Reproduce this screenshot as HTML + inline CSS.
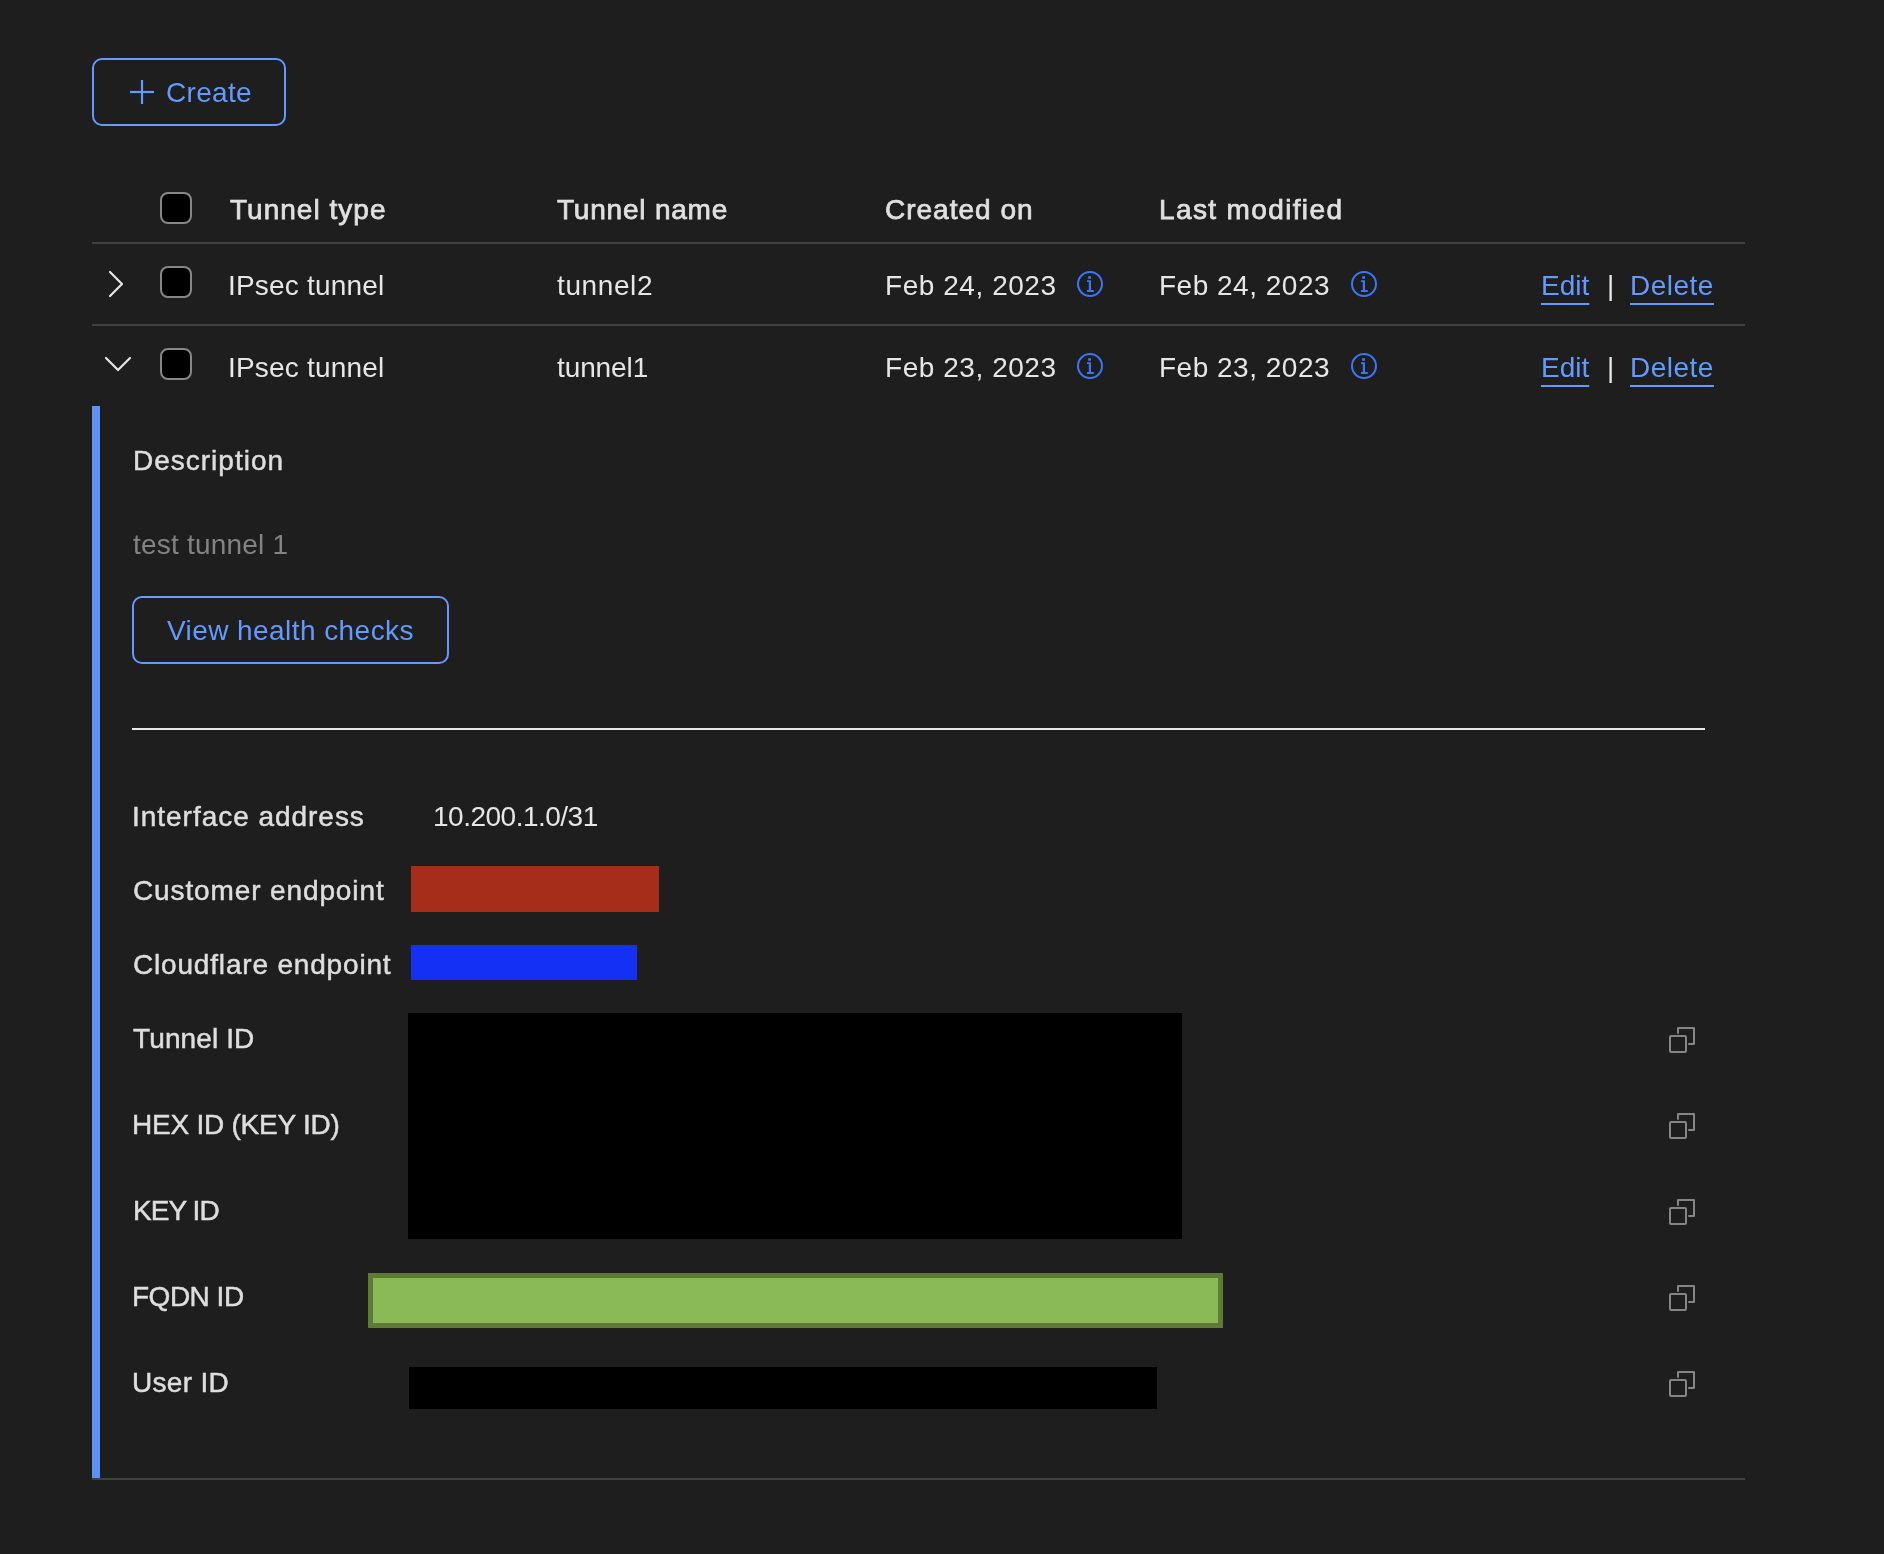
<!DOCTYPE html>
<html>
<head>
<meta charset="utf-8">
<style>
html,body{margin:0;padding:0;}
body{width:1884px;height:1554px;overflow:hidden;background:#1e1e1e;position:relative;font-family:"Liberation Sans",sans-serif;color:#e6e6e6;}
.a{position:absolute;}
.t{position:absolute;font-size:28px;line-height:28px;white-space:nowrap;}
.b{font-weight:700;}
.blue{color:#6499ff;}
.btn{position:absolute;box-sizing:border-box;border:2px solid #6499ff;border-radius:10px;}
.cb{position:absolute;box-sizing:border-box;width:32px;height:32px;border:2px solid #878787;border-radius:8px;background:#000;}
.hl{position:absolute;left:92px;width:1653px;height:2px;background:#404040;}
.lnk{color:#6499ff;text-decoration:underline;text-decoration-thickness:2px;text-underline-offset:8px;}
.lbl{left:133px;}
.hd{-webkit-text-stroke:0.75px #e0e0e0;color:#e0e0e0;}
.med{-webkit-text-stroke:0.5px #dedede;color:#dedede;}
</style>
</head>
<body>
<div id="root" style="position:absolute;left:0;top:0;width:1884px;height:1554px;will-change:transform;">

<!-- Create button -->
<div class="btn" style="left:92px;top:58px;width:194px;height:68px;"></div>
<svg class="a" style="left:0;top:0" width="1884" height="1554">
  <g stroke="#6499ff" stroke-width="2.2" fill="none">
    <line x1="142" y1="80" x2="142" y2="104"/>
    <line x1="130" y1="92" x2="154" y2="92"/>
  </g>
</svg>
<div class="t blue" style="left:166px;top:79px;letter-spacing:0.3px;">Create</div>

<!-- Header -->
<div class="cb" style="left:160px;top:192px;"></div>
<div class="t hd" style="left:230px;top:196px;letter-spacing:1.02px;">Tunnel type</div>
<div class="t hd" style="left:557px;top:196px;letter-spacing:0.79px;">Tunnel name</div>
<div class="t hd" style="left:885px;top:196px;letter-spacing:1px;">Created on</div>
<div class="t hd" style="left:1159px;top:196px;letter-spacing:1.37px;">Last modified</div>
<div class="hl" style="top:242px;"></div>

<!-- Row 1 -->
<div class="cb" style="left:160px;top:266px;"></div>
<div class="t" style="left:228px;top:272px;letter-spacing:0.2px;">IPsec tunnel</div>
<div class="t" style="left:557px;top:272px;letter-spacing:0.6px;">tunnel2</div>
<div class="t" style="left:885px;top:272px;letter-spacing:0.55px;">Feb 24, 2023</div>
<div class="t" style="left:1159px;top:272px;letter-spacing:0.5px;">Feb 24, 2023</div>
<div class="t lnk" style="left:1541px;top:272px;">Edit</div>
<div class="t" style="left:1607px;top:272px;">|</div>
<div class="t lnk" style="left:1630px;top:272px;letter-spacing:0.5px;">Delete</div>
<div class="hl" style="top:324px;"></div>

<!-- Row 2 -->
<div class="cb" style="left:160px;top:348px;"></div>
<div class="t" style="left:228px;top:354px;letter-spacing:0.2px;">IPsec tunnel</div>
<div class="t" style="left:557px;top:354px;letter-spacing:-0.1px;">tunnel1</div>
<div class="t" style="left:885px;top:354px;letter-spacing:0.55px;">Feb 23, 2023</div>
<div class="t" style="left:1159px;top:354px;letter-spacing:0.5px;">Feb 23, 2023</div>
<div class="t lnk" style="left:1541px;top:354px;">Edit</div>
<div class="t" style="left:1607px;top:354px;">|</div>
<div class="t lnk" style="left:1630px;top:354px;letter-spacing:0.5px;">Delete</div>

<!-- icons svg -->
<svg class="a" style="left:0;top:0" width="1884" height="1554">
  <g stroke="#e6e6e6" stroke-width="2.2" fill="none" stroke-linecap="round" stroke-linejoin="round">
    <path d="M110 272 L122 284 L110 296"/>
    <path d="M106 358 L118 370 L130 358"/>
  </g>
  <g id="info" stroke="#3b76f6" fill="none">
    <circle cx="1090" cy="284" r="12" stroke-width="2"/>
  </g>
  <g fill="#3b76f6">
    <rect x="1088.2" y="276.2" width="2.8" height="2.6"/>
    <path d="M1087 280.3 H1091 V290.1 H1093.8 V292 H1087 V290.1 H1088.8 V282.1 H1087 Z"/>
  </g>
  <g stroke="#3b76f6" fill="none"><circle cx="1364" cy="284" r="12" stroke-width="2"/></g>
  <g fill="#3b76f6">
    <rect x="1362.2" y="276.2" width="2.8" height="2.6"/>
    <path d="M1361 280.3 H1365 V290.1 H1367.8 V292 H1361 V290.1 H1362.8 V282.1 H1361 Z"/>
  </g>
  <g stroke="#3b76f6" fill="none"><circle cx="1090" cy="366" r="12" stroke-width="2"/></g>
  <g fill="#3b76f6">
    <rect x="1088.2" y="358.2" width="2.8" height="2.6"/>
    <path d="M1087 362.3 H1091 V372.1 H1093.8 V374 H1087 V372.1 H1088.8 V364.1 H1087 Z"/>
  </g>
  <g stroke="#3b76f6" fill="none"><circle cx="1364" cy="366" r="12" stroke-width="2"/></g>
  <g fill="#3b76f6">
    <rect x="1362.2" y="358.2" width="2.8" height="2.6"/>
    <path d="M1361 362.3 H1365 V372.1 H1367.8 V374 H1361 V372.1 H1362.8 V364.1 H1361 Z"/>
  </g>
</svg>

<!-- Expanded area -->
<div class="a" style="left:92px;top:406px;width:8px;height:1072px;background:#5d91f3;"></div>
<div class="t med" style="left:133px;top:447px;letter-spacing:1px;">Description</div>
<div class="t" style="left:133px;top:531px;color:#838383;letter-spacing:0.2px;">test tunnel 1</div>
<div class="btn" style="left:132px;top:596px;width:317px;height:68px;"></div>
<div class="t blue" style="left:167px;top:617px;letter-spacing:0.43px;">View health checks</div>
<div class="a" style="left:132px;top:728px;width:1573px;height:2px;background:#e8e8ea;"></div>

<div class="t lbl med" style="left:132px;top:803px;letter-spacing:0.97px;">Interface address</div>
<div class="t" style="left:433px;top:803px;letter-spacing:-0.5px;">10.200.1.0/31</div>
<div class="t lbl med" style="top:877px;letter-spacing:0.88px;">Customer endpoint</div>
<div class="a" style="left:411px;top:866px;width:248px;height:46px;background:#a52d1a;"></div>
<div class="t lbl med" style="top:951px;letter-spacing:0.82px;">Cloudflare endpoint</div>
<div class="a" style="left:411px;top:945px;width:226px;height:35px;background:#1530f5;"></div>

<div class="t lbl med" style="top:1025px;letter-spacing:0.12px;">Tunnel ID</div>
<div class="t lbl med" style="left:132px;top:1111px;letter-spacing:-0.24px;">HEX ID (KEY ID)</div>
<div class="t lbl med" style="top:1197px;letter-spacing:-0.92px;">KEY ID</div>
<div class="t lbl med" style="left:132px;top:1283px;letter-spacing:-0.5px;">FQDN ID</div>
<div class="t lbl med" style="left:132px;top:1369px;letter-spacing:0.3px;">User ID</div>

<div class="a" style="left:408px;top:1013px;width:774px;height:226px;background:#000;"></div>
<div class="a" style="left:368px;top:1273px;width:855px;height:55px;box-sizing:border-box;border:5px solid #5c7b35;background:#89ba57;"></div>
<div class="a" style="left:409px;top:1367px;width:748px;height:42px;background:#000;"></div>

<svg class="a" style="left:0;top:0" width="1884" height="1554">
  <defs>
    <g id="cp" stroke="#858585" stroke-width="2" fill="none" stroke-linejoin="round" stroke-linecap="round">
      <rect x="1670" y="1036" width="16" height="16" rx="1"/>
      <path d="M1678 1033 V1028 H1694 V1044 H1689"/>
    </g>
  </defs>
  <use href="#cp"/>
  <use href="#cp" y="86"/>
  <use href="#cp" y="172"/>
  <use href="#cp" y="258"/>
  <use href="#cp" y="344"/>
</svg>

<div class="hl" style="top:1478px;"></div>

</div>
</body>
</html>
